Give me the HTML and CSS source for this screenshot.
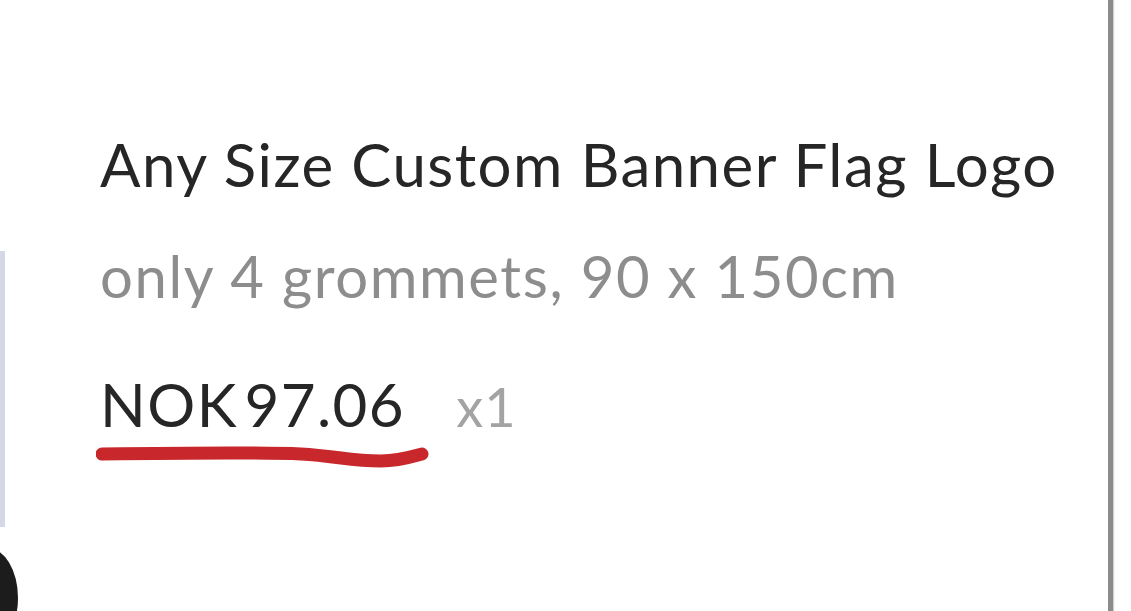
FILE: index.html
```html
<!DOCTYPE html>
<html lang="en">
<head>
  <meta charset="UTF-8" />
  <meta name="viewport" content="width=device-width, initial-scale=1.0" />
  <title>Cart item</title>
  <link rel="stylesheet" href="styles.css">
</head>
<body>

  <!-- cart line -->
  <div class="cart-item">
    <div class="thumb"></div>
    <div class="details">
      <div class="item-name">Any Size Custom Banner Flag Logo</div>
      <div class="item-variant">only 4 grommets, 90 x 150cm</div>
      <div class="item-price-row">
        <span class="item-price">NOK 97.06
          <svg class="scribble" viewBox="0 0 340 32">
            <path d="M6 12 C 80 11, 160 10, 205 12 C 240 14, 255 19, 285 19 C 305 19, 318 14, 326 12" />
          </svg>
        </span>
        <span class="item-qty">x1</span>
      </div>
    </div>
    <div class="remove-btn"></div>
  </div>

</body>
</html>
```

FILE: styles.css
```css
body {
  margin: 0;
  background: white;
  font-family: Lato, "Open Sans", sans-serif;
  overflow: hidden;
}

.cart-item {
  position: relative;
  display: flex;
  width: 1108px;
  height: 611px;
  overflow: hidden;
  border-right: 5px solid #8c8c8c;
  box-shadow: 1px 0 1px #d0d0d0;
  background: white;
}

.thumb {
  width: 5px;
  height: 276px;
  margin-top: 251px;
  background: #d3d7e6;
}

.details {
  padding-left: 95px;
  padding-top: 128px;
  color: #262626;
}

.item-name {
  font-size: 60px;
  line-height: 72px;
  letter-spacing: 1.45px;
}

.item-variant {
  margin-top: 40px;
  font-size: 58px;
  line-height: 72px;
  letter-spacing: 1.6px;
  color: #8d8d8d;
}

.item-price-row {
  margin-top: 56px;
  font-size: 60px;
  line-height: 72px;
}

.item-price {
  position: relative;
  display: inline-block;
  letter-spacing: 1.4px;
  word-spacing: -10px;
}

.item-qty {
  margin-left: 36px;
  color: #a3a3a3;
  font-size: 54px;
  letter-spacing: 1px;
}

.scribble {
  position: absolute;
  left: -4px;
  top: 74px;
  width: 340px;
  height: 32px;
  fill: none;
  stroke: #c8282b;
  stroke-width: 13;
  stroke-linecap: round;
}

.remove-btn {
  position: absolute;
  left: -42px;
  top: 548px;
  width: 60px;
  height: 100px;
  border-radius: 50%;
  background: #1c1c1c;
}
```
